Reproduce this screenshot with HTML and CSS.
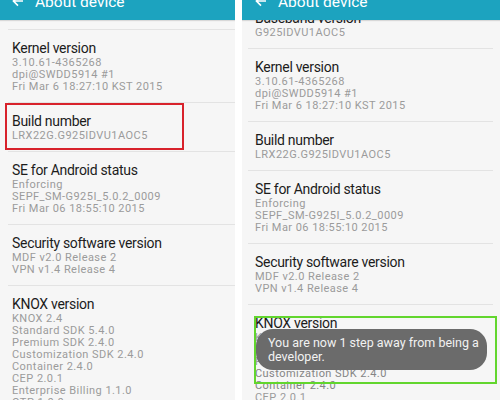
FILE: index.html
```html
<!DOCTYPE html>
<html>
<head>
<meta charset="utf-8">
<link rel="stylesheet" href="styles.css">
</head>
<body>
<div class="page">
  <section class="panel panel-left">
    <header class="appbar">
      <svg class="back" viewBox="0 0 12 12" width="12" height="12"><path d="M11 6H1.6M6 1.4L1.4 6 6 10.6" fill="none" stroke="#fff" stroke-width="1.6"/></svg>
      <span class="appbar-title">About device</span>
    </header>
    <div class="list list-left">
      <div class="item">
        <div class="title">Kernel version</div>
        <div class="sub">3.10.61-4365268</div>
        <div class="sub">dpi@SWDD5914 #1</div>
        <div class="sub">Fri Mar 6 18:27:10 KST 2015</div>
      </div>
      <div class="item item-hl">
        <span class="hl-red"></span>
        <div class="title">Build number</div>
        <div class="sub">LRX22G.G925IDVU1AOC5</div>
      </div>
      <div class="item">
        <div class="title">SE for Android status</div>
        <div class="sub">Enforcing</div>
        <div class="sub">SEPF_SM-G925I_5.0.2_0009</div>
        <div class="sub">Fri Mar 06 18:55:10 2015</div>
      </div>
      <div class="item">
        <div class="title">Security software version</div>
        <div class="sub">MDF v2.0 Release 2</div>
        <div class="sub">VPN v1.4 Release 4</div>
      </div>
      <div class="item">
        <div class="title">KNOX version</div>
        <div class="sub">KNOX 2.4</div>
        <div class="sub">Standard SDK 5.4.0</div>
        <div class="sub">Premium SDK 2.4.0</div>
        <div class="sub">Customization SDK 2.4.0</div>
        <div class="sub">Container 2.4.0</div>
        <div class="sub">CEP 2.0.1</div>
        <div class="sub">Enterprise Billing 1.1.0</div>
        <div class="sub">OTP 1.0.0</div>
      </div>
    </div>
  </section>
  <section class="panel panel-right">
    <div class="list list-right">
      <div class="item">
        <div class="title">Baseband version</div>
        <div class="sub">G925IDVU1AOC5</div>
      </div>
      <div class="item">
        <div class="title">Kernel version</div>
        <div class="sub">3.10.61-4365268</div>
        <div class="sub">dpi@SWDD5914 #1</div>
        <div class="sub">Fri Mar 6 18:27:10 KST 2015</div>
      </div>
      <div class="item">
        <div class="title">Build number</div>
        <div class="sub">LRX22G.G925IDVU1AOC5</div>
      </div>
      <div class="item">
        <div class="title">SE for Android status</div>
        <div class="sub">Enforcing</div>
        <div class="sub">SEPF_SM-G925I_5.0.2_0009</div>
        <div class="sub">Fri Mar 06 18:55:10 2015</div>
      </div>
      <div class="item">
        <div class="title">Security software version</div>
        <div class="sub">MDF v2.0 Release 2</div>
        <div class="sub">VPN v1.4 Release 4</div>
      </div>
      <div class="item">
        <div class="title">KNOX version</div>
        <div class="sub">KNOX 2.4</div>
        <div class="sub">Standard SDK 5.4.0</div>
        <div class="sub">Premium SDK 2.4.0</div>
        <div class="sub dim">Customization SDK 2.4.0</div>
        <div class="sub dim">Container 2.4.0</div>
        <div class="sub">CEP 2.0.1</div>
      </div>
    </div>
    <header class="appbar appbar-over">
      <svg class="back" viewBox="0 0 12 12" width="12" height="12"><path d="M11 6H1.6M6 1.4L1.4 6 6 10.6" fill="none" stroke="#fff" stroke-width="1.6"/></svg>
      <span class="appbar-title">About device</span>
    </header>
    <div class="hl-green"></div>
    <div class="toast">You are now 1 step away from being a developer.</div>
  </section>
</div>
</body>
</html>
```

FILE: styles.css
```css
* { box-sizing: border-box; }
html, body {
  margin: 0;
  padding: 0;
  background: #ffffff;
}
body {
  font-family: Roboto, "Noto Sans", "Liberation Sans", sans-serif;
  width: 500px;
  height: 400px;
  overflow: hidden;
}
.page {
  display: flex;
  gap: 7px;
  width: 500px;
  height: 400px;
}
.panel {
  position: relative;
  height: 400px;
  overflow: hidden;
  background: #f6f6f6;
}
.panel-left { width: 235px; flex: none; }
.panel-right { flex: 1; }

.appbar {
  height: 40px;
  margin-top: -20px;
  background: #1ca3bf;
  display: flex;
  align-items: center;
  color: #fff;
  box-shadow: 0 1px 1px rgba(0,0,0,0.12);
}
.panel-left .appbar { padding-left: 12px; }
.appbar-over {
  position: absolute;
  top: -20px;
  left: 0;
  right: 0;
  margin-top: 0;
  padding-left: 13px;
}
.back { flex: none; margin-top: 2px; }
.appbar-title {
  font-size: 15.5px;
  margin-left: 11px;
  margin-top: 3px;
  line-height: 20px;
}

.list-left { margin-top: 8px; border-top: 1px solid transparent; }
.list-left .item:first-child { border-top: 1px solid #e3e3e3; }
.item {
  position: relative;
  padding: 10px 4px 9px;
  border-bottom: 1px solid #e3e3e3;
}
.list-left .item { margin: 0 0 0 8px; }
.list-right .item { margin: 0 7px 0 6px; padding-left: 7px; }

.title {
  font-size: 14px;
  line-height: 17px;
  letter-spacing: -0.3px;
  color: #1c1c1c;
  white-space: nowrap;
}
.sub {
  font-size: 11px;
  line-height: 12px;
  letter-spacing: 0.45px;
  color: #9b9b9b;
  white-space: nowrap;
}
.sub.dim { color: #858585; }

.hl-red {
  position: absolute;
  left: -3px;
  top: 0;
  width: 179px;
  height: 47px;
  border: 2px solid #d8222b;
}
.hl-green {
  position: absolute;
  left: 12px;
  top: 316px;
  width: 243px;
  height: 68px;
  border: 2px solid #62d62e;
}
.toast {
  position: absolute;
  left: 14px;
  top: 329px;
  width: 231px;
  height: 41px;
  padding: 7px 8px 0 12px;
  border-radius: 17px;
  background: #6b6b6b;
  color: #f2f2f2;
  font-size: 12.5px;
  line-height: 13.5px;
}
```
